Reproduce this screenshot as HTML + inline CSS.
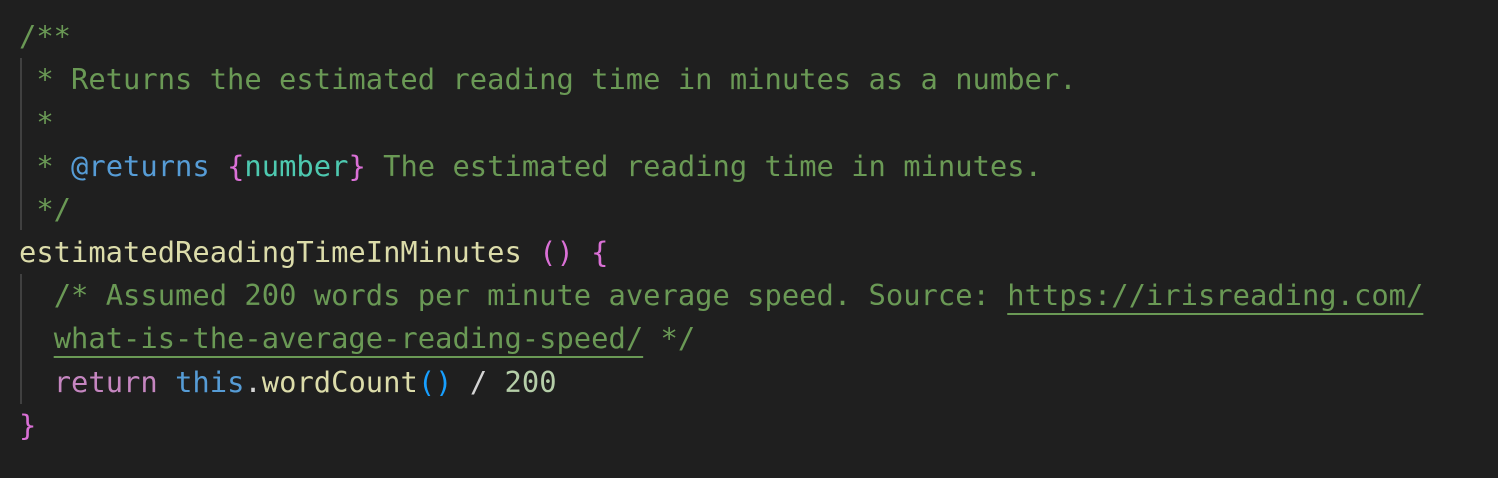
<!DOCTYPE html>
<html><head><style>
html,body{margin:0;padding:0;background:#1f1f1f;width:1498px;height:478px;overflow:hidden}
pre{margin:0;position:absolute;left:19px;top:15px;font-family:"DejaVu Sans Mono","Liberation Mono",monospace;font-size:28.8px;line-height:43.2px;color:#d4d4d4}
.c{color:#6a9955}.t{color:#569cd6}.n{color:#4ec9b0}.p{color:#da70d6}.f{color:#dcdcaa}.k{color:#c586c0}.b{color:#179fff}.num{color:#b5cea8}
.u{text-decoration:underline;text-underline-offset:8px;text-decoration-thickness:2px}
.g{position:absolute;width:2px;background:#404040}
</style></head><body>
<div class="g" style="left:20px;top:58px;height:172px"></div>
<div class="g" style="left:20px;top:274px;height:130px"></div>
<pre><span class="c">/**</span>
<span class="c"> * Returns the estimated reading time in minutes as a number.</span>
<span class="c"> *</span>
<span class="c"> * </span><span class="t">@returns</span><span class="c"> </span><span class="p">{</span><span class="n">number</span><span class="p">}</span><span class="c"> The estimated reading time in minutes.</span>
<span class="c"> */</span>
<span class="f">estimatedReadingTimeInMinutes</span> <span class="p">()</span> <span class="p">{</span>
  <span class="c">/* Assumed 200 words per minute average speed. Source: <span class="u">https://irisreading.com/</span></span>
  <span class="c"><span class="u">what-is-the-average-reading-speed/</span> */</span>
  <span class="k">return</span> <span class="t">this</span>.<span class="f">wordCount</span><span class="b">()</span> / <span class="num">200</span>
<span class="p">}</span></pre>
</body></html>
